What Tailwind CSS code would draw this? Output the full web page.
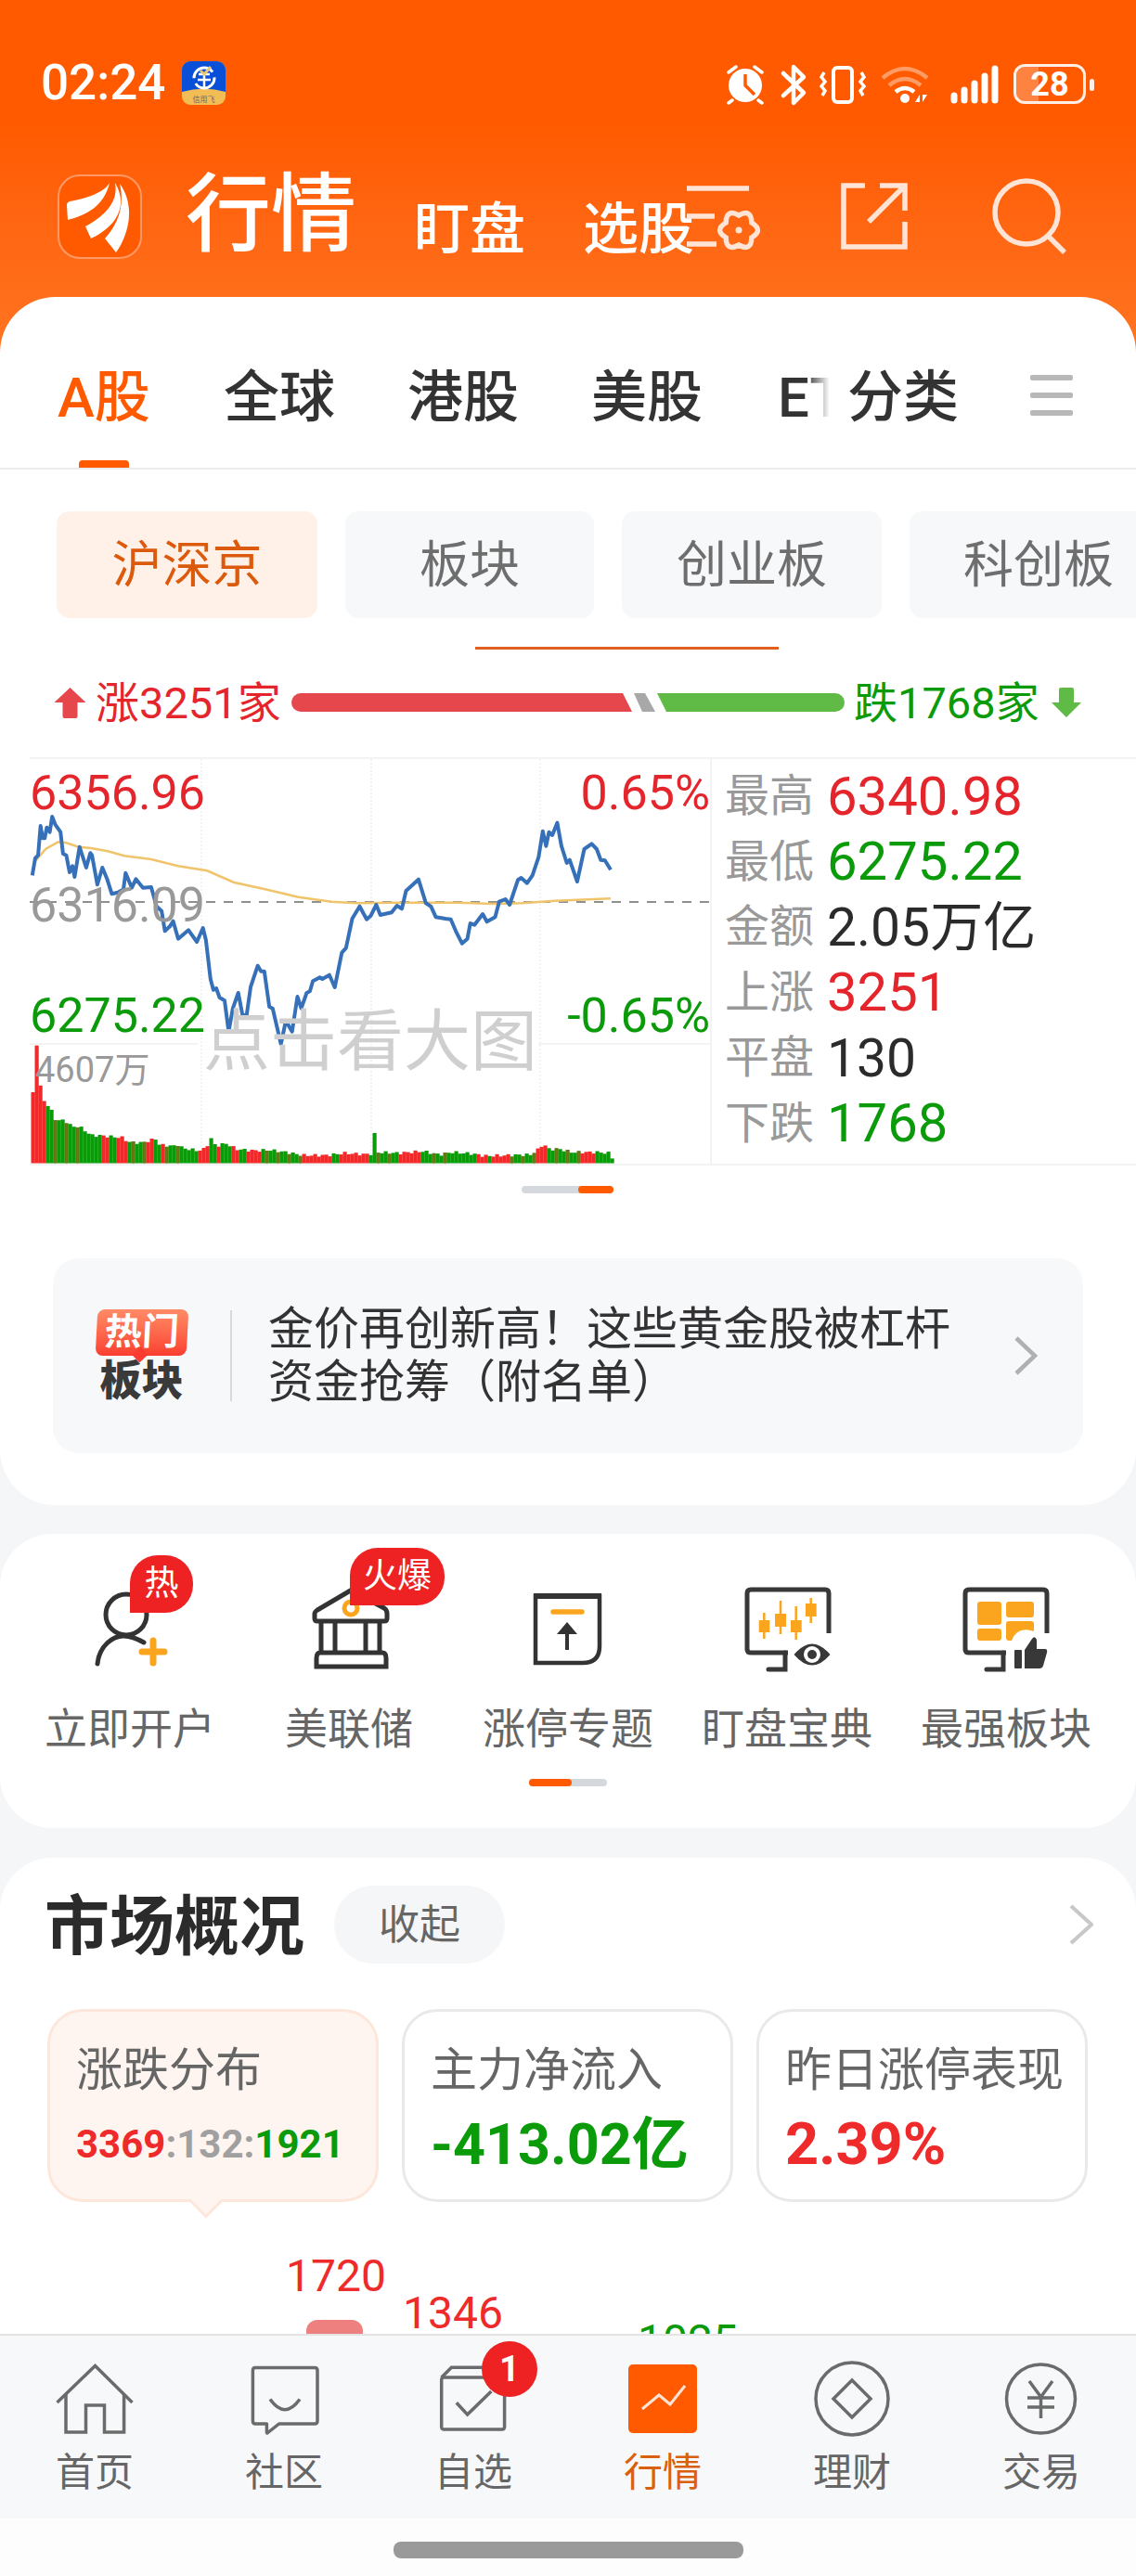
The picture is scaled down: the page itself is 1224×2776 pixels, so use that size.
<!DOCTYPE html>
<html lang="zh-CN">
<head>
    <meta charset="UTF-8">
    <meta name="viewport" content="width=device-width, initial-scale=1.0">
    <title>行情</title>
    <script src="https://cdn.jsdelivr.net/npm/@tailwindcss/browser@4"></script>
</head>
<body>
<div class="relative w-[1224px] h-[2776px] overflow-hidden bg-[#f5f6f8] font-['Roboto','Noto_Sans_CJK_SC',sans-serif] text-[#333]">

    <!-- Orange header -->
    <div class="h-[380px] -mb-[60px] bg-linear-to-b from-[#ff5a00] from-[35%] to-[#ff7420] text-white">
        <!-- Status bar -->
        <div class="flex h-[188px] pt-[66px] items-start">
            <div class="ml-[44px] w-[152px] text-[53px] leading-[47px] font-medium">02:24</div>
            <svg class="w-[47px] h-[47px]" viewBox="0 0 47 47">
                <rect width="47" height="47" rx="9" fill="#f2bd55"/>
                <path d="M0 9a9 9 0 0 1 9-9h29a9 9 0 0 1 9 9v24q-23 -7 -47 0z" fill="#0a4fd8"/>
                <circle cx="24" cy="18" r="11" fill="none" stroke="#fff" stroke-width="3" stroke-dasharray="28 6"/>
                <path d="M18 14h12M17 20h14M24 14v14" stroke="#fff" stroke-width="2.5"/>
                <path d="M20 10l4 4 7-8" fill="none" stroke="#e8c878" stroke-width="3"/>
                <text x="23.5" y="44" font-size="8" text-anchor="middle" fill="#6b6b6b">信用飞</text>
            </svg>
            <svg class="ml-[540px] -mt-[1px] w-[395px] h-[50px]" viewBox="783 65 395 50">
                <!-- alarm -->
                <circle cx="803" cy="92" r="18" fill="#fff"/>
                <path d="M803 80v12l10 10" fill="none" stroke="#ff5a00" stroke-width="3.5"/>
                <path d="M785 78l8-6M821 78l-8-6M789 108l-4 3M817 108l4 3" stroke="#fff" stroke-width="3.5" stroke-linecap="round"/>
                <!-- bluetooth -->
                <path d="M844 79l22 21-11 11V72l11 11-22 20" fill="none" stroke="#fff" stroke-width="4.5" stroke-linejoin="round" stroke-linecap="round"/>
                <!-- vibrate -->
                <rect x="898" y="73" width="20" height="37" rx="4" fill="none" stroke="#fff" stroke-width="4"/>
                <path d="M888 78l-3 5 4 5-4 5 4 5-3 5M928 78l3 5-4 5 4 5-4 5 3 5" fill="none" stroke="#fff" stroke-width="3.5"/>
                <!-- wifi -->
                <path d="M951 84q24-20 48 0" fill="none" stroke="#fff" stroke-opacity="0.4" stroke-width="4.5"/>
                <path d="M958 92q17-14 34 0" fill="none" stroke="#fff" stroke-opacity="0.4" stroke-width="4.5"/>
                <path d="M965 99q10-8 20 0" fill="none" stroke="#fff" stroke-width="4.5"/>
                <circle cx="975" cy="106" r="5" fill="#fff"/>
                <path d="M991 110v-8l-5 8zM994 102v8l5-8z" fill="#fff"/>
                <!-- signal -->
                <path d="M1028 103v5M1039 97v11M1050 90v18M1061 82v26M1072 74v34" stroke="#fff" stroke-width="7" stroke-linecap="round"/>
            </svg>
        </div>
        <div class="absolute left-[1092px] top-[69px] w-[78px] h-[43px] rounded-[12px] border-[3px] border-white/90 overflow-hidden flex items-center justify-center text-[36px] font-bold leading-none">
            <div class="absolute left-0 top-0 bottom-0 w-[24px] bg-white/25"></div>
            <span class="relative">28</span>
        </div>
        <div class="absolute left-[1174px] top-[85px] w-[5px] h-[13px] rounded-full bg-white/90"></div>

        <!-- Title row -->
        <div class="flex items-start pl-[62px]">
            <svg class="w-[91px] h-[91px]" viewBox="0 0 91 91">
                <rect x="1" y="1" width="89" height="89" rx="23" fill="#ff5a00" stroke="#ff9a68" stroke-width="2"/>
                <path d="M56 9C50 20 30 26 13 29Q10 30 10 33L11 49C30 44 50 35 56 9Z" fill="#fff"/>
                <path d="M62 9C66 30 50 45 30 56L36 69C60 58 78 36 62 9Z" fill="#fff"/>
                <path d="M67 10C82 30 80 60 63 84L51 69C64 55 73 35 67 10Z" fill="#fff"/>
            </svg>
            <div class="ml-[47px] w-[186px] text-[92px] leading-[88px] font-medium">行情</div>
            <div class="ml-[60px] mt-[31px] w-[120px] text-[60px] leading-[58px] font-medium">盯盘</div>
            <div class="ml-[62px] mt-[31px] w-[120px] text-[60px] leading-[58px] font-medium">选股</div>
            <svg class="-ml-[10px] w-[84px] h-[84px]" viewBox="738 188 84 84" fill="none" stroke="#ffe4d6" stroke-width="5.5">
                <path d="M740 203H807M740 233H770M740 263H772"/>
                <path transform="translate(796 248)" d="M13.9 -8Q27 0 13.9 8Q13.5 23.4 0 16Q-13.5 23.4 -13.9 8Q-27 0 -13.9 -8Q-13.5 -23.4 0 -16Q13.5 -23.4 13.9 -8Z"/>
                <circle cx="796" cy="248" r="3.5" fill="#ffe4d6" stroke="none"/>
            </svg>
            <svg class="ml-[80px] w-[80px] h-[84px]" viewBox="902 188 80 84" fill="none" stroke="#ffe4d6" stroke-width="5.5">
                <path d="M932 200H909V266H975V239"/>
                <path d="M948 200H975V227M975 200L936 239"/>
            </svg>
            <svg class="ml-[86px] w-[84px] h-[90px]" viewBox="1068 188 84 90" fill="none" stroke="#ffe4d6" stroke-width="5.5">
                <circle cx="1106" cy="229" r="34"/>
                <path d="M1130 255L1147 272"/>
            </svg>
        </div>
    </div>

    <!-- Index card -->
    <div class="relative bg-white rounded-[60px] h-[1302px]">
        <!-- Category tabs -->
        <div class="flex h-[186px] pt-[79px] pl-[62px] border-b-2 border-[#ececec] text-[60px] leading-[60px] font-medium">
            <div class="relative w-[100px] text-[#ff5a00]">
                A股
                <div class="absolute left-[23px] top-[97px] w-[54px] h-[8px] rounded-t-[4px] bg-[#ff5a00]"></div>
            </div>
            <div class="ml-[79px] w-[120px]">全球</div>
            <div class="ml-[78px] w-[120px]">港股</div>
            <div class="ml-[78px] w-[120px]">美股</div>
            <div class="ml-[81px] w-[68px] whitespace-nowrap bg-linear-to-r from-[#333] from-[45%] to-transparent to-[82%] bg-clip-text text-transparent">ET</div>
            <div class="ml-[7px] w-[120px]">分类</div>
            <div class="ml-[77px] mt-[5px] w-[46px] flex flex-col gap-[13px]">
                <div class="h-[6px] rounded-[2px] bg-[#b8b8b8]"></div>
                <div class="h-[6px] rounded-[2px] bg-[#b8b8b8]"></div>
                <div class="h-[6px] rounded-[2px] bg-[#b8b8b8]"></div>
            </div>
        </div>

        <!-- Sub tabs -->
        <div class="flex mt-[45px] pl-[61px] gap-[30px] h-[115px] text-[54px] text-[#6e6e6e] whitespace-nowrap">
            <div class="w-[281px] shrink-0 flex items-center justify-center pt-[2px] rounded-[14px] bg-[#fff0e8] text-[#dc5a0c]">沪深京</div>
            <div class="w-[268px] shrink-0 flex items-center justify-center pt-[2px] rounded-[14px] bg-[#f7f8fa]">板块</div>
            <div class="w-[280px] shrink-0 flex items-center justify-center pt-[2px] rounded-[14px] bg-[#f7f8fa]">创业板</div>
            <div class="w-[300px] shrink-0 flex items-center pl-[58px] pt-[2px] rounded-[14px] bg-[#f7f8fa]">科创板</div>
        </div>
        <div class="mt-[31px] ml-[512px] w-[327px] h-[3px] bg-[#e0611f]"></div>

        <!-- Rise / fall bar -->
        <div class="flex items-center mt-[37px] h-[40px] pl-[58px] text-[47px]">
            <svg class="w-[35px] h-[34px]" viewBox="0 0 34 34"><path d="M17 1L34 17H25V32Q25 34 23 34H11Q9 34 9 32V17H0Z" fill="#e6474c"/></svg>
            <div class="ml-[10px] w-[211px] pt-[3px] text-[#e4262c]">涨3251家</div>
            <svg class="w-[596px] h-[20px]" viewBox="0 0 596 20">
                <path d="M10 0H357L367 20H10A10 10 0 0 1 10 0Z" fill="#e6474c"/>
                <path d="M369 0H381L392 20H378Z" fill="#a8a8a8"/>
                <path d="M394 0H586A10 10 0 0 1 586 20H404Z" fill="#5fbb46"/>
            </svg>
            <div class="ml-[10px] w-[213px] pt-[3px] text-[#0a9a0a]">跌1768家</div>
            <svg class="w-[32px] h-[34px]" viewBox="0 0 32 34"><path d="M16 33L32 17H24V3Q24 1 22 1H10Q8 1 8 3V17H0Z" fill="#5fbb46"/></svg>
        </div>

        <!-- Chart and stats -->
        <div class="flex mt-[39px] ml-[32px] h-[440px] border-y-2 border-[#f3f3f3]">
            <div class="relative w-[733px] shrink-0">
                <svg id="chart" class="absolute left-0 top-0" width="733" height="436" viewBox="0 0 733 436"></svg>
                <div class="absolute left-0 top-[12px] text-[52px] leading-[50px] text-[#e4262c]">6356.96</div>
                <div class="absolute right-0 top-[12px] text-[52px] leading-[50px] text-[#e4262c]">0.65%</div>
                <div class="absolute left-0 top-[133px] text-[52px] leading-[50px] text-[#999]">6316.09</div>
                <div class="absolute left-0 top-[252px] text-[52px] leading-[50px] text-[#0a9a0a]">6275.22</div>
                <div class="absolute right-0 top-[252px] text-[52px] leading-[50px] text-[#0a9a0a]">-0.65%</div>
                <div class="absolute left-[6px] top-[316px] text-[38px] leading-[38px] text-[#999]">4607万</div>
                <div class="absolute left-[187px] top-[269px] text-[72px] leading-[72px] text-[#cfcfcf] whitespace-nowrap">点击看大图</div>
            </div>
            <div class="flex-1 border-l-2 border-[#f3f3f3] pl-[14px] pt-[5px] text-[48px] text-[#999]">
                <div class="flex items-center h-[70.5px]">最高<span class="ml-[14px] text-[58px] text-[#e4262c]">6340.98</span></div>
                <div class="flex items-center h-[70.5px]">最低<span class="ml-[14px] text-[58px] text-[#0a9a0a]">6275.22</span></div>
                <div class="flex items-center h-[70.5px]">金额<span class="ml-[14px] text-[57px] text-[#2b2b2b]">2.05万亿</span></div>
                <div class="flex items-center h-[70.5px]">上涨<span class="ml-[14px] text-[58px] text-[#e4262c]">3251</span></div>
                <div class="flex items-center h-[70.5px]">平盘<span class="ml-[14px] text-[57px] text-[#2b2b2b]">130</span></div>
                <div class="flex items-center h-[70.5px]">下跌<span class="ml-[14px] text-[58px] text-[#0a9a0a]">1768</span></div>
            </div>
        </div>

        <!-- Chart pager -->
        <div class="flex mt-[22px] ml-[562px] w-[99px] h-[8px] rounded-full bg-[#d5d8dc] justify-end">
            <div class="w-[38px] h-[8px] rounded-full bg-[#ff5a00]"></div>
        </div>

        <!-- News banner -->
        <div class="flex items-center mt-[70px] mx-[57px] h-[210px] rounded-[28px] bg-[#f7f8fa]">
            <div class="ml-[45px] w-[101px] flex flex-col items-center">
                <div class="relative w-[98px] h-[50px] rounded-[8px] -skew-x-3 bg-linear-to-b from-[#ff8a66] to-[#fa3c30] flex items-center justify-center text-white text-[40px] leading-[40px] font-bold">
                    热门
                    <div class="absolute left-[42px] -bottom-[5px] w-[12px] h-[12px] rotate-45 bg-[#fa3c30]"></div>
                </div>
                <div class="mt-[5px] text-[45px] leading-[46px] font-black text-[#3a3a3a]">板块</div>
            </div>
            <div class="ml-[45px] w-[2px] h-[98px] bg-[#d8d8dc]"></div>
            <div class="ml-[39px] w-[760px] text-[49px] leading-[57px] text-[#333]">金价再创新高！这些黄金股被杠杆<br>资金抢筹（附名单）</div>
            <svg class="ml-[43px] w-[26px] h-[42px]" viewBox="0 0 26 42"><path d="M3 2L23 21L3 40" fill="none" stroke="#b0b0b0" stroke-width="4.5"/></svg>
        </div>
    </div>

    <!-- Shortcuts card -->
    <div class="bg-white rounded-[56px] mt-[31px] h-[317px] pt-[15px]">
        <div class="flex pl-[22px] text-[46px] text-[#666]">
            <div class="relative w-[236px] flex flex-col items-center">
                <svg class="w-[236px] h-[142px]" viewBox="0 0 236 142" fill="none" stroke="#333" stroke-width="5">
                    <circle cx="114" cy="72" r="22"/>
                    <path d="M83 125C85 105 100 95 111 95C118 95 126 98 133 102" stroke-linecap="round"/>
                    <path d="M131 112H155M143 100V124" stroke="#fba51f" stroke-width="7" stroke-linecap="round"/>
                </svg>
                <div class="absolute left-[118px] top-[8px] w-[68px] h-[62px] rounded-[30px] rounded-bl-none bg-[#ee2222] text-white text-[37px] flex items-center justify-center">热</div>
                <div class="mt-[30px] leading-[46px] whitespace-nowrap">立即开户</div>
            </div>
            <div class="relative w-[236px] flex flex-col items-center">
                <svg class="w-[236px] h-[142px]" viewBox="0 0 236 142" fill="none" stroke="#333" stroke-width="5">
                    <path d="M84 67L118 47Q120 45 122 47L156 65Q159 67 159 71V76Q159 79 156 79H84Q81 79 81 76V71Q81 69 84 67Z"/>
                    <path d="M88 79V112M103 79V112M136 79V112M151 79V112"/>
                    <path d="M87 113H154Q158 113 158 119V128H83V119Q83 113 87 113Z"/>
                    <circle cx="120" cy="65" r="7" stroke="#fba51f"/>
                </svg>
                <div class="absolute left-[119px] top-0 w-[102px] h-[62px] rounded-[30px] rounded-bl-none bg-[#ee2222] text-white text-[37px] flex items-center justify-center whitespace-nowrap">火爆</div>
                <div class="mt-[30px] leading-[46px] whitespace-nowrap">美联储</div>
            </div>
            <div class="w-[236px] flex flex-col items-center">
                <svg class="w-[236px] h-[142px]" viewBox="0 0 236 142" fill="none" stroke="#333" stroke-width="4.5">
                    <path d="M83 52H152V106Q152 124 134 124H83Z"/>
                    <path d="M81 52H154" stroke-width="6"/>
                    <path d="M102 69H133" stroke="#fba51f" stroke-width="5.5" stroke-linecap="round"/>
                    <path d="M117 80L128 93H106Z" fill="#333" stroke="none"/>
                    <path d="M117 90V110" stroke-width="4"/>
                </svg>
                <div class="mt-[30px] leading-[46px] whitespace-nowrap">涨停专题</div>
            </div>
            <div class="w-[236px] flex flex-col items-center">
                <svg class="w-[236px] h-[142px]" viewBox="0 0 236 142" fill="none" stroke="#383838" stroke-width="5">
                    <path d="M163 92V49Q163 45 159 45H79Q75 45 75 49V109Q75 113 79 113H119"/>
                    <path d="M116 113V131H98" stroke-linecap="round"/>
                    <path d="M93.3 70V98M111 57V93M127.7 63V99M143.7 54V81" stroke="#fba51f" stroke-width="2.5"/>
                    <g fill="#fba51f" stroke="none">
                        <rect x="87.7" y="78" width="11.6" height="13"/>
                        <rect x="105" y="71" width="12" height="14"/>
                        <rect x="122" y="78" width="11.7" height="13"/>
                        <rect x="138" y="60" width="11.7" height="14"/>
                    </g>
                    <path d="M125.5 115Q145 92 164.5 115Q145 138 125.5 115Z" fill="#383838" stroke="none"/>
                    <circle cx="145" cy="115" r="9" fill="#fff" stroke="none"/>
                    <circle cx="145" cy="115" r="5" fill="#383838" stroke="none"/>
                </svg>
                <div class="mt-[30px] leading-[46px] whitespace-nowrap">盯盘宝典</div>
            </div>
            <div class="w-[236px] flex flex-col items-center">
                <svg class="w-[236px] h-[142px]" viewBox="0 0 236 142" fill="none" stroke="#383838" stroke-width="5">
                    <path d="M162 92V49Q162 45 158 45H78Q74 45 74 49V109Q74 113 78 113H118"/>
                    <path d="M115 113V131H97" stroke-linecap="round"/>
                    <g fill="#fba51f" stroke="none">
                        <rect x="87" y="58" width="26" height="25" rx="3"/>
                        <rect x="118" y="58" width="30" height="17" rx="3"/>
                        <rect x="87" y="87" width="26" height="13" rx="3"/>
                        <path d="M121 79H145Q148 79 148 82V90Q130 84 124 100H121Q118 100 118 97V82Q118 79 121 79Z"/>
                    </g>
                    <g fill="#383838" stroke="none">
                        <rect x="127" y="110" width="8" height="20" rx="1"/>
                        <path d="M138 110L146 98Q149 94 151 99V109H160Q163 109 162 113L158 127Q157 130 154 130H138Z"/>
                    </g>
                </svg>
                <div class="mt-[30px] leading-[46px] whitespace-nowrap">最强板块</div>
            </div>
        </div>
        <div class="flex mt-[31px] ml-[570px] w-[84px] h-[8px] rounded-full bg-[#d5d8dc]">
            <div class="w-[46px] h-[8px] rounded-full bg-[#ff5a00]"></div>
        </div>
    </div>

    <!-- Market overview card -->
    <div class="relative bg-white rounded-t-[56px] mt-[32px] h-[800px] pt-[30px]">
        <div class="flex items-center h-[84px] pl-[48px]">
            <div class="w-[280px] pt-[5px] text-[70px] leading-[70px] font-bold text-[#2b2b2b] whitespace-nowrap">市场概况</div>
            <div class="ml-[32px] w-[184px] h-[84px] pt-[2px] rounded-full bg-[#f5f6f8] flex items-center justify-center text-[44px] text-[#666]">收起</div>
            <svg class="ml-[608px] w-[26px] h-[44px]" viewBox="0 0 26 44"><path d="M2 2L24 22L2 42" fill="none" stroke="#c8c8c8" stroke-width="4"/></svg>
        </div>
        <div class="flex mt-[49px] pl-[51px] gap-[25px]">
            <div class="relative w-[357px] h-[208px] rounded-[38px] border-[3px] border-[#fde6da] bg-[#fff5f0] pl-[28px] pt-[38px]">
                <div class="text-[50px] leading-[50px] text-[#666]">涨跌分布</div>
                <div class="mt-[32px] text-[42px] leading-[46px] font-bold whitespace-nowrap"><span class="text-[#ee2a2a]">3369</span><span class="text-[#a0a0a0]">:132:</span><span class="text-[#0a9a0a]">1921</span></div>
                <div class="absolute left-[155px] -bottom-[15px] w-[26px] h-[26px] rotate-45 bg-[#fff5f0] border-r-[3px] border-b-[3px] border-[#fde6da]"></div>
            </div>
            <div class="w-[357px] h-[208px] rounded-[38px] border-[3px] border-[#e9e9e9] pl-[28px] pt-[38px]">
                <div class="text-[50px] leading-[50px] text-[#666] whitespace-nowrap">主力净流入</div>
                <div class="mt-[25px] text-[61px] leading-[60px] font-bold text-[#0a9a0a] whitespace-nowrap">-413.02亿</div>
            </div>
            <div class="w-[357px] h-[208px] rounded-[38px] border-[3px] border-[#e9e9e9] pl-[28px] pt-[38px]">
                <div class="text-[50px] leading-[50px] text-[#666] whitespace-nowrap">昨日涨停表现</div>
                <div class="mt-[25px] text-[63px] leading-[60px] font-bold text-[#ee2a2a]">2.39%</div>
            </div>
        </div>
        <!-- Distribution histogram, clipped by the tab bar -->
        <div class="absolute left-[308px] top-[427px] text-[48px] leading-[48px] text-[#ee2a2a]">1720</div>
        <div class="absolute left-[330px] top-[498px] w-[61px] h-[40px] rounded-t-[12px] bg-[#ee8080]"></div>
        <div class="absolute left-[434px] top-[467px] text-[48px] leading-[48px] text-[#ee2a2a]">1346</div>
        <div class="absolute left-[687px] top-[497px] text-[48px] leading-[48px] text-[#0a9a0a]">1025</div>
    </div>

    <!-- Bottom tab bar -->
    <div class="absolute left-0 right-0 bottom-0 h-[261px] bg-[#fdfdfd]">
        <div class="h-[199px] pt-[25px] bg-[#f7f8fa] border-t-2 border-[#e3e3e3] grid grid-cols-6 text-[42px] leading-[42px] text-[#666]">
            <div class="flex flex-col items-center">
                <svg class="w-[100px] h-[88px]" viewBox="0 0 100 88" fill="none" stroke="#6b6b6b" stroke-width="3.5">
                    <path d="M9.5 47L50.5 7.5L90.5 47"/>
                    <path d="M19 38V79H40.5V50H60.5V79H81.6V38"/>
                </svg>
                <div class="mt-[14px]">首页</div>
            </div>
            <div class="flex flex-col items-center">
                <svg class="w-[100px] h-[88px]" viewBox="0 0 100 88" fill="none" stroke="#6b6b6b" stroke-width="3.5">
                    <path d="M19 9.5H83Q86 9.5 86 12.5V67Q86 70 83 70H44.6L32 80Q31.4 80.5 31.4 78V70H19Q16.4 70 16.4 67V12.5Q16.4 9.5 19 9.5Z" stroke-linejoin="round"/>
                    <path d="M35 43.5Q51 66 67 43.5"/>
                </svg>
                <div class="mt-[14px]">社区</div>
            </div>
            <div class="relative flex flex-col items-center">
                <svg class="w-[100px] h-[88px]" viewBox="0 0 100 88" fill="none" stroke="#6b6b6b" stroke-width="3.5">
                    <path d="M18 20H81Q83.6 20 83.6 23V73Q83.6 76 81 76H18Q15.7 76 15.7 73V23Q15.7 20 18 20Z"/>
                    <path d="M15.7 20L26.4 9.3H70"/>
                    <path d="M31.8 47.3L43.6 60L69.3 35"/>
                </svg>
                <div class="absolute left-[111px] -top-[19px] w-[60px] h-[60px] rounded-full bg-[#ee2222] text-white text-[38px] font-bold flex items-center justify-center">1</div>
                <div class="mt-[14px]">自选</div>
            </div>
            <div class="flex flex-col items-center text-[#d9600f]">
                <svg class="w-[100px] h-[88px]" viewBox="0 0 100 88">
                    <rect x="13" y="6" width="74" height="74" rx="5" fill="#ff5a00"/>
                    <path d="M28 54L46 39L58 49L74 29" fill="none" stroke="#ffe4d6" stroke-width="3"/>
                </svg>
                <div class="mt-[14px]">行情</div>
            </div>
            <div class="flex flex-col items-center">
                <svg class="w-[100px] h-[88px]" viewBox="0 0 100 88" fill="none" stroke="#6b6b6b" stroke-width="3.5">
                    <circle cx="50" cy="43" r="39"/>
                    <path d="M50 23L70 43L50 63L30 43Z"/>
                </svg>
                <div class="mt-[14px]">理财</div>
            </div>
            <div class="flex flex-col items-center">
                <svg class="w-[100px] h-[88px]" viewBox="0 0 100 88" fill="none" stroke="#6b6b6b" stroke-width="3.5">
                    <circle cx="49.5" cy="43" r="37"/>
                    <path d="M37 24L49.5 41L62 24M49.5 41V64M35 42H64M35 52H64"/>
                </svg>
                <div class="mt-[14px]">交易</div>
            </div>
        </div>
        <div class="mt-[25px] ml-[424px] w-[377px] h-[18px] rounded-[8px] bg-[#9a9a9a]"></div>
    </div>
</div>

<script>
    // all points below were read off the reference at 2.24x / 3x
    const blue = [[78,430],[85,375],[92,365],[98,270],[103,310],[108,310],[113,275],[120,290],[126,240],[133,265],[146,290],[152,360],[160,365],[168,420],[175,400],[180,435],[192,338],[208,405],[218,358],[222,365],[235,460],[247,405],[258,440],[270,490],[285,485],[298,475],[303,422],[318,470],[328,442],[345,470],[365,468],[378,530],[390,545],[398,610],[410,595],[418,578],[430,635],[455,607],[475,645],[490,600],[497,640],[508,765],[515,800],[522,795],[530,825],[542,835],[552,935],[562,860],[575,810],[585,880],[595,885],[605,790],[622,722],[630,740],[638,740],[650,855],[658,860],[678,975],[690,900],[705,935],[718,822],[727,860],[740,810],[748,805],[755,772],[772,760],[778,765],[795,752],[808,792],[825,680],[835,665],[850,570],[868,530],[885,572],[895,560],[908,525],[918,558],[945,550],[958,528],[970,538],[980,480],[1010,443],[1028,520],[1040,530],[1052,565],[1075,570],[1088,572],[1100,610],[1115,650],[1128,635],[1135,585],[1145,590],[1165,555],[1175,580],[1195,565],[1205,515],[1220,507],[1230,525],[1250,445],[1258,438],[1272,455],[1285,430],[1300,370],[1310,287],[1318,335],[1325,290],[1333,300],[1345,260],[1355,335],[1368,390],[1375,380],[1393,450],[1410,345],[1428,328],[1440,345],[1450,380],[1460,382],[1474,412]];
    const avg = [[85,385],[110,345],[140,322],[160,325],[190,338],[220,342],[260,352],[300,367],[365,378],[430,400],[500,415],[565,453],[640,475],[720,500],[800,515],[860,520],[960,518],[1100,518],[1190,522],[1260,520],[1340,512],[1474,505]];
    const volTop = [[75,352],[84,80],[88,80],[95,198],[105,258],[118,280],[128,300],[135,325],[155,320],[165,335],[175,342],[190,342],[205,355],[218,370],[250,372],[270,375],[295,378],[310,392],[340,395],[375,382],[385,402],[420,405],[425,397],[440,412],[480,420],[497,412],[507,377],[520,405],[545,397],[570,415],[610,420],[650,418],[690,425],[730,435],[790,435],[830,428],[880,432],[896,430],[899,360],[903,360],[906,425],[960,428],[1020,422],[1060,433],[1090,425],[1140,430],[1170,437],[1280,433],[1300,415],[1312,395],[1320,415],[1350,415],[1380,425],[1440,425],[1470,428],[1478,445]];
    // r = red, g = green, a = green with a thin red bar now and then
    const volColor = [[103,'r'],[155,'a'],[205,'a'],[245,'g'],[255,'r'],[280,'g'],[300,'r'],[352,'a'],[362,'r'],[382,'g'],[395,'r'],[440,'a'],[478,'g'],[497,'r'],[518,'g'],[524,'r'],[552,'g'],[576,'r'],[592,'g'],[625,'r'],[690,'a'],[728,'a'],[800,'r'],[812,'g'],[890,'r'],[960,'a'],[1015,'r'],[1030,'g'],[1090,'a'],[1145,'g'],[1170,'r'],[1180,'g'],[1225,'r'],[1290,'a'],[1320,'r'],[1395,'a'],[1430,'r'],[1480,'g']];

    const toPath = (pts) => pts.map(([x, y]) => `${(x / 2.24 - 32).toFixed(1)},${(y / 3 - 18).toFixed(1)}`).join(' ');

    function topAt(x) {
        for (let i = 1; i < volTop.length; i++) {
            if (x <= volTop[i][0]) {
                const [x0, y0] = volTop[i - 1];
                const [x1, y1] = volTop[i];
                return y0 + (y1 - y0) * (x - x0) / (x1 - x0);
            }
        }
        return 445;
    }

    let bars = '';
    for (let k = 0; k < 157; k++) {
        const zx = 75 + k * 8.96;
        const x = zx / 2.24 - 32;
        const kind = (volColor.find(c => zx < c[0]) || [0, 'g'])[1];
        const y = topAt(zx + 4) / 3 + 282 + (k > 3 ? Math.sin(k * 2.3) * 1.5 : 0);
        const h = 435.5 - y;
        bars += `<rect x="${x.toFixed(1)}" y="${y.toFixed(1)}" width="4.2" height="${h.toFixed(1)}" fill="${kind === 'r' ? '#ee2a2a' : '#0a9a0a'}"/>`;
        if (kind === 'a' && k % 3 === 0) {
            bars += `<rect x="${(x + 1).toFixed(1)}" y="${y.toFixed(1)}" width="2" height="${h.toFixed(1)}" fill="#b8521c"/>`;
        }
    }

    document.getElementById('chart').innerHTML = `
        <path d="M185 0V436M368 0V436M550 0V436" stroke="#f0f0f0" stroke-width="1.5" stroke-dasharray="2 2"/>
        <path d="M0 307H181M548 307H733" stroke="#f3f3f3" stroke-width="2"/>
        <path d="M0 154H733" stroke="#8f8f8f" stroke-width="2" stroke-dasharray="10 9"/>
        <polyline points="${toPath(avg)}" fill="none" stroke="#f0c46a" stroke-width="2.5"/>
        <polyline points="${toPath(blue)}" fill="none" stroke="#3570b8" stroke-width="4" stroke-linejoin="round"/>
        ${bars}`;
</script>
</body>
</html>
